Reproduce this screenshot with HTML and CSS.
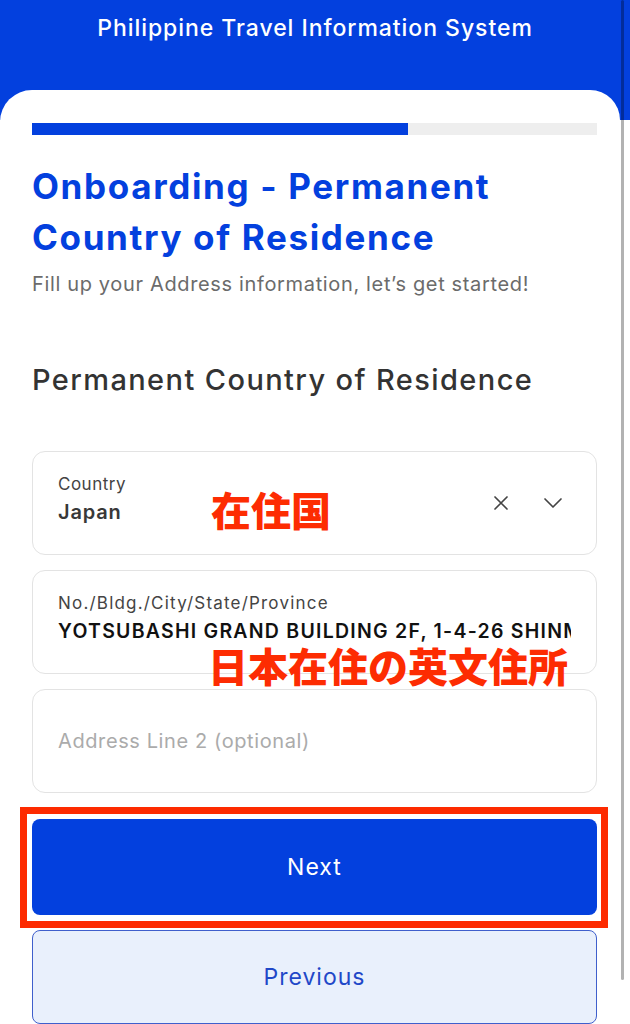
FILE: index.html
```html
<!DOCTYPE html>
<html lang="en">
<head>
<meta charset="utf-8">
<title>Philippine Travel Information System</title>
<link rel="stylesheet" href="styles.css">
</head>
<body>
<div class="app">
  <header class="topbar">
    <h1 class="topbar-title">Philippine Travel Information System</h1>
  </header>
  <main class="card">
    <div class="progress"><div class="progress-fill" style="width:66.5%"></div></div>
    <h2 class="page-title">Onboarding - Permanent Country of Residence</h2>
    <p class="page-sub">Fill up your Address information, let’s get started!</p>
    <h3 class="section-title">Permanent Country of Residence</h3>

    <div class="fields">
      <div class="field field-select">
        <div class="field-body">
          <span class="field-label">Country</span>
          <span class="field-value">Japan</span>
        </div>
        <div class="field-icons">
          <svg class="icon" width="16" height="16" viewBox="0 0 16 16"><path d="M2 2 L14 14 M14 2 L2 14" fill="none" stroke="#444" stroke-width="1.7" stroke-linecap="round"/></svg>
          <svg class="icon" width="20" height="12" viewBox="0 0 20 12"><path d="M2 2 L10 10 L18 2" fill="none" stroke="#444" stroke-width="1.7" stroke-linecap="round" stroke-linejoin="round"/></svg>
        </div>
      </div>
      <div class="field">
        <div class="field-body">
          <span class="field-label field-label-wide">No./Bldg./City/State/Province</span>
          <span class="field-value field-value-strong">YOTSUBASHI GRAND BUILDING 2F, 1-4-26 SHINMACHI</span>
        </div>
      </div>
      <div class="field field-empty">
        <span class="field-placeholder">Address Line 2 (optional)</span>
      </div>
    </div>

    <div class="actions">
      <div class="highlight">
        <button class="btn btn-primary">Next</button>
      </div>
      <button class="btn btn-secondary">Previous</button>
    </div>

    <span class="note note-country">在住国</span>
    <span class="note note-address">日本在住の英文住所</span>
  </main>
  <div class="scroll-indicator"></div>
</div>
</body>
</html>
```

FILE: styles.css
```css
* { box-sizing: border-box; }

html, body {
  margin: 0;
  padding: 0;
  background: #ffffff;
}

body {
  font-family: Inter, "Noto Sans", "Liberation Sans", sans-serif;
  color: #333333;
  width: 630px;
  overflow: hidden;
}

.app {
  position: relative;
  width: 630px;
  min-height: 1024px;
}

.topbar {
  background: #0340de;
  height: 120px;
  padding-top: 14px;
}

.topbar-title {
  margin: 0;
  text-align: center;
  color: #ffffff;
  font-size: 23px;
  line-height: 28px;
  font-weight: 500;
  letter-spacing: 0.95px;
}

.card {
  position: relative;
  margin-top: -30px;
  width: 620px;
  background: #ffffff;
  border-radius: 32px 30px 0 0;
  padding: 33px 23px 0 32px;
}

.progress {
  height: 12px;
  background: #eeeeee;
  width: 565px;
}

.progress-fill {
  height: 100%;
  background: #0340de;
}

.page-title {
  margin: 26px 0 0;
  color: #0340de;
  font-size: 35px;
  line-height: 51px;
  font-weight: 700;
  letter-spacing: 1.65px;
  max-width: 520px;
}

.page-sub {
  margin: 7px 0 0;
  color: #6b6b6b;
  font-size: 20px;
  line-height: 28px;
  font-weight: 400;
  letter-spacing: 0.65px;
}

.section-title {
  margin: 64px 0 0;
  color: #333333;
  font-size: 29px;
  line-height: 36px;
  font-weight: 500;
  letter-spacing: 1.4px;
}

.fields {
  margin-top: 53px;
  width: 565px;
  display: flex;
  flex-direction: column;
  gap: 15px;
}

.field {
  height: 104px;
  border: 1px solid #e3e3e3;
  border-radius: 13px;
  padding: 21px 25px 0 25px;
  display: flex;
  align-items: flex-start;
  overflow: hidden;
}

.field-body {
  display: flex;
  flex-direction: column;
  min-width: 0;
  flex: 1;
}

.field-label {
  font-size: 17px;
  line-height: 22px;
  color: #444444;
  white-space: nowrap;
  letter-spacing: 0.5px;
}

.field-label-wide {
  letter-spacing: 1.2px;
}

.field-value {
  margin-top: 4px;
  font-size: 20px;
  line-height: 26px;
  font-weight: 600;
  color: #383838;
  white-space: nowrap;
  overflow: hidden;
  letter-spacing: 0.8px;
}

.field-value-strong {
  font-size: 19.5px;
  color: #111111;
  letter-spacing: 1.25px;
}

.field-icons {
  display: flex;
  align-items: center;
  gap: 34px;
  margin-top: 22px;
  margin-right: 8px;
}

.icon { display: block; }

.field-empty {
  padding-top: 0;
  align-items: center;
}

.field-placeholder {
  font-size: 20px;
  color: #ababab;
  letter-spacing: 0.6px;
}

.actions {
  margin-top: 26px;
  width: 565px;
  display: flex;
  flex-direction: column;
  gap: 15px;
}

.highlight {
  position: relative;
}

.highlight::after {
  content: "";
  position: absolute;
  left: -12px;
  right: -11px;
  top: -12px;
  bottom: -13px;
  border: 7px solid #fd2a00;
  pointer-events: none;
}

.btn {
  display: block;
  width: 100%;
  font-family: inherit;
  font-size: 23px;
  letter-spacing: 1px;
  border-radius: 8px;
  cursor: pointer;
}

.btn-primary {
  height: 96px;
  background: #0340de;
  color: #ffffff;
  border: none;
}

.btn-secondary {
  height: 94px;
  background: #e9f0fc;
  color: #1f48c8;
  border: 1.5px solid #3f5fcc;
}

.note {
  position: absolute;
  color: #fd2c02;
  font-family: "Noto Sans CJK JP", sans-serif;
  font-weight: 900;
  font-size: 40px;
  line-height: 40px;
  letter-spacing: 0;
  white-space: nowrap;
}

.note-country { top: 399px; left: 211px; }
.note-address { top: 555px; left: 208px; }

.scroll-indicator {
  position: absolute;
  left: 621px;
  top: 0;
  width: 3px;
  height: 980px;
  background: rgba(0, 0, 0, 0.3);
  border-radius: 2px;
}
```
